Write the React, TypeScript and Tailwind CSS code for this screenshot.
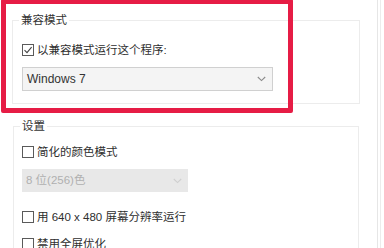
import React from 'react'

const FONT = { fontFamily: '"Liberation Sans", "Noto Sans CJK SC", sans-serif' }

function CheckBox({ checked, label }: { checked?: boolean; label: string }) {
    return (
        <div className="flex items-center h-[16px]">
            <div className="w-[12px] h-[12px] border border-[#5a5a5a] bg-white flex items-center justify-center">
                {checked && (
                    <svg width="10" height="10" viewBox="0 0 10 10">
                        <path d="M1.5 5.2 L4 7.6 L8.6 2.2" fill="none" stroke="#444" strokeWidth="1.1" />
                    </svg>
                )}
            </div>
            <span className="ml-[3px] text-[11.5px] text-[#2e2e2e] leading-[16px]">{label}</span>
        </div>
    )
}

function Chevron({ color }: { color: string }) {
    return (
        <svg width="9" height="6" viewBox="0 0 9 6">
            <path d="M0.8 1 L4.5 4.6 L8.2 1" fill="none" stroke={color} strokeWidth="1.1" />
        </svg>
    )
}

function GroupLabel({ text }: { text: string }) {
    return (
        <div className="-mt-[8px] ml-[6px] w-fit bg-white px-[2px] text-[11.5px] leading-[14px] text-[#333]">
            {text}
        </div>
    )
}

export default function App() {
    return (
        <div className="relative w-[384px] h-[248px] bg-white overflow-hidden" style={FONT}>
            <div className="flex h-full">
                {/* page */}
                <div className="w-[378px] h-full border-r border-[#e6e6e6] pl-[12px] pt-[20px]">
                    {/* 兼容模式 */}
                    <div className="w-[348px] h-[84px] border border-[#ececec]">
                        <GroupLabel text="兼容模式" />
                        <div className="pl-[9px] mt-[15px]">
                            <CheckBox checked label="以兼容模式运行这个程序:" />
                            <div className="mt-[9px] w-[251px] h-[24px] border border-[#d0d0d0] bg-[#f4f4f4] flex items-center justify-between pl-[4px] pr-[6px]">
                                <span className="text-[12px] text-[#333]">Windows 7</span>
                                <Chevron color="#8a8a8a" />
                            </div>
                        </div>
                    </div>

                    {/* 设置 */}
                    <div className="ml-[1px] mt-[22px] w-[346px] h-[200px] border border-[#ececec]">
                        <GroupLabel text="设置" />
                        <div className="pl-[8px] mt-[11px]">
                            <CheckBox label="简化的颜色模式" />
                            <div className="mt-[9px] w-[166px] h-[23px] bg-[#e8e8e8] flex items-center justify-between pl-[4px] pr-[6px]">
                                <span className="text-[11.5px] text-[#b0b0b0]">8 位(256)色</span>
                                <Chevron color="#cfcfcf" />
                            </div>
                            <div className="mt-[17px]">
                                <CheckBox label="用 640 x 480 屏幕分辨率运行" />
                            </div>
                            <div className="mt-[11px]">
                                <CheckBox label="禁用全屏优化" />
                            </div>
                        </div>
                    </div>
                </div>
                <div className="w-[3px] h-full border-r border-[#ececec]" />
            </div>

            {/* highlight frame */}
            <div className="absolute left-[1px] -top-[1px] w-[292px] h-[114px] border-[5px] border-[#e61c45] rounded-[2px]" />
        </div>
    )
}
